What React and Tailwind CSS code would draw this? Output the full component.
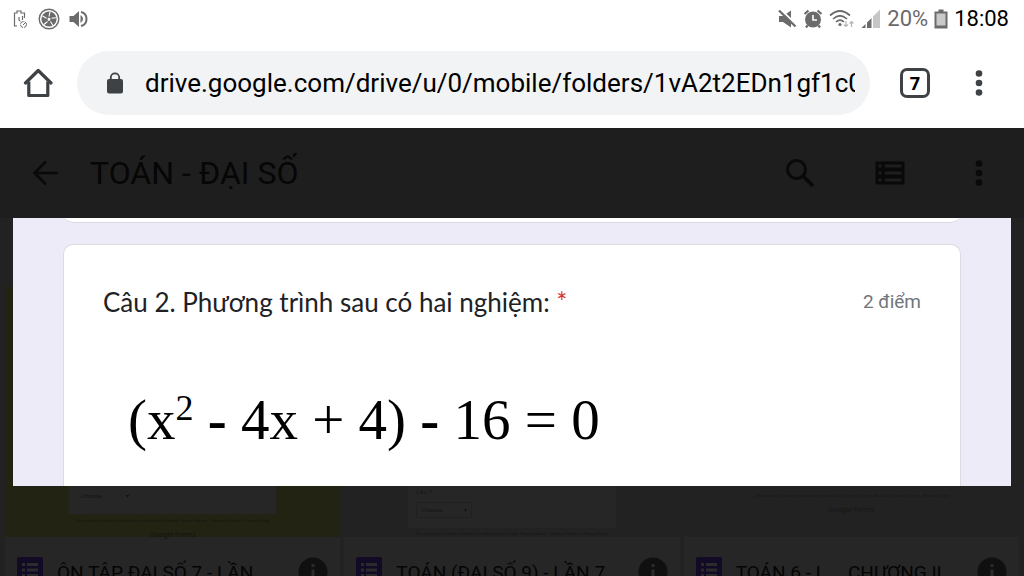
import React, { useState } from "react";

const FILES = [
  { id: 1, name: "ÔN TẬP ĐẠI SỐ 7 - LẦN", tone: "olive" },
  { id: 2, name: "TOÁN (ĐẠI SỐ 9) - LẦN 7", tone: "select" },
  { id: 3, name: "TOÁN 6 - L…\u00a0 CHƯƠNG II", tone: "footer" },
];

const DISCLAIMER =
  "This content is neither created nor endorsed by Google. Report Abuse - Terms of Service - Privacy Policy";

const MoreDots = ({ className }) => (
  <svg viewBox="0 0 8 28" className={className} fill="currentColor">
    <circle cx="4" cy="4.500" r="3.300" />
    <circle cx="4" cy="14" r="3.300" />
    <circle cx="4" cy="23.500" r="3.300" />
  </svg>
);

function StatusBar() {
  return (
    <div className="h-[38px] px-3 flex items-center justify-between text-[#6b6b6b]">
      <div className="flex items-center gap-2">
        {/* battery saver */}
        <svg viewBox="0 0 18 20" className="w-[18px] h-5" fill="none" stroke="currentColor">
          <path d="M5 17H2.500V4H5V2h4v2h3.500v5" strokeWidth="1.200" />
          <path d="M7 8v2.500q0 1.500 1.500 1.500M10.500 7v4" strokeWidth="1.200" />
          <circle cx="11.500" cy="15.500" r="3" strokeWidth="1" strokeDasharray="4 1" />
          <path d="M11 16l2-2" strokeWidth="1" />
        </svg>
        {/* soccer ball */}
        <svg viewBox="0 0 22 22" className="w-[22px] h-[22px]">
          <circle cx="11" cy="11" r="9.800" fill="none" stroke="currentColor" strokeWidth="1.400" />
          <circle cx="11" cy="11" r="7.600" fill="currentColor" />
          <g stroke="white" strokeWidth="1.100" fill="none">
            <path d="M11 8.500l1-4.500M13.500 10.300l4.500-0.500M12.500 13.500l2.500 4M9.500 13.500l-3.500 3M8.500 10.300L4.500 8" />
          </g>
          <path d="M11 9.500l1.600 1.200-.6 2h-2l-.6-2z" fill="white" />
        </svg>
        <svg viewBox="0 0 20 20" className="w-5 h-5">
          <path d="M1.500 7h4L11 2v16l-5.500-5h-4z" fill="currentColor" />
          <path d="M12.500 6q2.500 1.500 2.500 4t-2.500 4" fill="currentColor" />
          <path d="M13 3a7.200 7.200 0 0 1 0 14" fill="none" stroke="currentColor" strokeWidth="2" />
        </svg>
      </div>
      <div className="flex items-center gap-[6px] pr-[3px]">
        {/* muted */}
        <svg viewBox="0 0 20 20" className="w-5 h-5">
          <path d="M2 7h4l8-5.500v17L6 13H2z" fill="currentColor" />
          <path d="M3 0l17 16" stroke="white" strokeWidth="2" />
          <path d="M2 1.500l16.500 16" stroke="currentColor" strokeWidth="2.400" />
        </svg>
        <svg viewBox="0 0 20 20" className="w-5 h-5">
          <circle cx="10" cy="10.500" r="8" fill="currentColor" />
          <path d="M1.500 5L5.500 1.500M18.500 5l-4-3.500M4.500 16.500L3 18.500M15.500 16.500l1.500 2" stroke="currentColor" strokeWidth="2.200" />
          <path d="M10 6v5h4" fill="none" stroke="white" strokeWidth="1.600" />
        </svg>
        <svg viewBox="0 0 26 20" className="w-[26px] h-5" fill="none">
          <path d="M1 6.500q10-9 20 0M4 10q7-6.500 14 0M7 13q4-3.800 8 0" stroke="currentColor" strokeWidth="1.700" />
          <circle cx="11" cy="15.500" r="1.600" fill="currentColor" />
          <path d="M17 12v5.500M15 15.500l2 2 2-2M22.500 18v-5.500M20.500 14.500l2-2 2 2" stroke="#b5b5b5" strokeWidth="1.200" />
        </svg>
        <svg viewBox="0 0 20 20" className="w-5 h-5">
          <path d="M0.500 19l4-4v4zM6 19v-5.500l4.500-4.500V19z" fill="currentColor" />
          <path d="M12 19V7.500L19 0.500V19z" fill="#c6c6c6" />
        </svg>
        <span className="font-[Roboto] text-[22px] leading-6">20%</span>
        <svg viewBox="0 0 14 20" className="w-[14px] h-5">
          <path d="M0.500 2.500h4V0.500h5v2h4v17h-13z" fill="currentColor" />
          <path d="M2.500 4.500h9v12h-9z" fill="#c9c9c9" />
        </svg>
        <span className="font-[Roboto] text-[22px] leading-6 text-black">18:08</span>
      </div>
    </div>
  );
}

function BrowserBar() {
  const [url, setUrl] = useState(
    "drive.google.com/drive/u/0/mobile/folders/1vA2t2EDn1gf1c0",
  );

  return (
    <div className="h-[90px] pl-[23px] pr-[41px] flex items-center text-[#3f4245]">
      <button aria-label="Home" className="mr-6">
        <svg viewBox="0 0 30 30" className="w-[30px] h-[30px]" fill="none" stroke="currentColor" strokeWidth="3.200" strokeLinejoin="round">
          <path d="M2.500 15L15.200 2.500 28 15" strokeLinecap="round" />
          <path d="M5.800 13.500v14h19v-14" />
        </svg>
      </button>
      <label className="flex-1 min-w-0 h-16 rounded-full bg-[#f1f3f4] pl-[29px] pr-[15px] flex items-center">
        <svg viewBox="0 0 18 22" className="w-[18px] h-[22px] mr-[21px] shrink-0">
          <rect x="1" y="7" width="16" height="14.500" rx="2" fill="currentColor" />
          <path d="M4.800 8V5.500a4.200 4.200 0 0 1 8.400 0V8" fill="none" stroke="currentColor" strokeWidth="1.800" />
        </svg>
        <input
          aria-label="Address"
          value={url}
          onChange={(e) => setUrl(e.target.value)}
          className="flex-1 min-w-0 bg-transparent font-[Roboto] text-[26px] leading-8 text-black focus:outline-none"
        />
      </label>
      <button
        aria-label="Tabs"
        className="ml-[30px] w-[30px] h-[30px] rounded-[7px] border-3 border-[#3f4245] flex items-center justify-center font-['Noto_Sans'] text-lg leading-6 font-bold text-black"
      >
        7
      </button>
      <button aria-label="Menu" className="ml-[45px]">
        <MoreDots className="w-2 h-7" />
      </button>
    </div>
  );
}

function DriveHeader() {
  return (
    <div className="h-[90px] shrink-0 bg-[#1e1e1e] pl-8 pr-[41px] flex items-center text-[#090909]">
      <button aria-label="Back" className="mr-8">
        <svg viewBox="0 0 26 26" className="w-[26px] h-[26px]" fill="none" stroke="currentColor" strokeWidth="2.500">
          <path d="M26 13H3M14 1.500L2.500 13 14 24.500" />
        </svg>
      </button>
      <h1 className="flex-1 font-[Roboto] text-[32px] leading-10 text-[#060606]">
        TOÁN - ĐẠI SỐ
      </h1>
      <button aria-label="Search" className="mr-[60px]">
        <svg viewBox="0 0 30 30" className="w-[30px] h-[30px]" fill="none" stroke="currentColor" strokeWidth="3">
          <circle cx="11.500" cy="11.500" r="9" />
          <path d="M18 18l10 10" strokeWidth="3.800" />
        </svg>
      </button>
      <button aria-label="List view" className="mr-[70px]">
        <svg viewBox="0 0 30 24" className="w-[30px] h-6">
          <path d="M0.500 0.500h29v23h-29z" fill="currentColor" />
          <path d="M3.500 3.500h3v3h-3zM10 3.500h16.500v3H10zM3.500 10.500h3v3h-3zM10 10.500h16.500v3H10zM3.500 17.500h3v3h-3zM10 17.500h16.500v3H10z" fill="#1e1e1e" />
        </svg>
      </button>
      <button aria-label="More">
        <MoreDots className="w-2 h-7" />
      </button>
    </div>
  );
}

function QuestionPreview() {
  return (
    <div className="flex shrink-0">
      {/* sliver of the first thumbnail behind the preview */}
      <div className="w-[13px] pt-[69px] pl-[5px] flex">
        <div className="flex-1 bg-[#232314]" />
      </div>
      <div className="flex-1 min-w-0 mr-[13px] px-[50px] bg-[#eeebf8]">
        <div className="h-[5px] overflow-hidden flex items-end">
          <div className="flex-1 h-6 rounded-b-[10px] border-b border-[#d9d7e0] bg-white" />
        </div>
        <div className="mt-[21px] rounded-t-[10px] border border-b-0 border-[#dadce0] bg-white px-[39px] pt-[39px] pb-[30px]">
          <div className="flex items-center justify-between">
            <h2 className="font-[Lato] text-[26px] leading-9 text-[#202124]">
              Câu 2. Phương trình sau có hai nghiệm: <span className="text-[#d93025]">*</span>
            </h2>
            <span className="font-[Roboto] text-[19px] leading-9 text-[#70757a]">2 điểm</span>
          </div>
          <p className="mt-16 pl-[25px] font-['Liberation_Serif'] text-[57px] leading-[72px] whitespace-nowrap text-black">
            (x<sup className="static align-[19px] text-[36px] leading-none">2</sup> <b>-</b> 4x + 4) <b>-</b> 16 = 0
          </p>
        </div>
      </div>
    </div>
  );
}

function Thumbnail({ tone }) {
  if (tone === "olive")
    return (
      <div className="h-[51px] bg-[#232314] text-center text-[#12120a]">
        <div className="mx-16 h-7 bg-[#262626] px-3 pt-1 flex gap-6 text-[6px] leading-3">
          <span>Choose</span>
          <span>▾</span>
        </div>
        <p className="pt-px text-[4px] leading-3">{DISCLAIMER}</p>
        <p className="text-[7px] leading-4">Google Forms</p>
      </div>
    );

  if (tone === "select")
    return (
      <div className="h-[51px] text-center text-[#141414]">
        <div className="mx-16 h-[42px] bg-[#262626] px-2 pb-2 text-left text-[6px]">
          <p className="leading-3">Câu 1</p>
          <div className="mt-1 w-14 h-4 border border-[#202020] px-1 flex items-center justify-between">
            <span>Choose</span>
            <span>▾</span>
          </div>
        </div>
        <p className="text-[4px] leading-3">{DISCLAIMER}</p>
      </div>
    );

  return (
    <div className="h-[51px] pt-1 text-center text-[#151515]">
      <p className="text-[4px] leading-3">{DISCLAIMER}</p>
      <p className="text-[7px] leading-4">Google Forms</p>
    </div>
  );
}

function FileCard({ file }) {
  return (
    <div className="min-w-0">
      <Thumbnail tone={file.tone} />
      <div className="h-[72px] bg-[#262626] px-3 pt-5 flex items-start">
        <svg viewBox="0 0 26 26" className="w-[26px] h-[26px] shrink-0">
          <rect width="26" height="26" rx="2" fill="#130a26" />
          <path d="M5 6h3v3H5zM10 6h11v3H10zM5 11.500h3v3H5zM10 11.500h11v3H10zM5 17h3v3H5zM10 17h11v3H10z" fill="#2b2b2b" />
        </svg>
        <span className="ml-[14px] flex-1 font-[Roboto] text-[19px] leading-8 whitespace-nowrap text-[#050505]">
          {file.name}
        </span>
        <button aria-label="Details">
          <svg viewBox="0 0 30 30" className="w-[30px] h-[30px]">
            <circle cx="15" cy="15" r="14.500" fill="#101010" />
            <path d="M13.500 7h3v3h-3zM13.500 12.500h3V22h-3z" fill="#2b2b2b" />
          </svg>
        </button>
      </div>
    </div>
  );
}

export default function App() {
  return (
    <div className="h-screen overflow-hidden flex flex-col bg-[#222222]">
      <div className="bg-white shrink-0">
        <StatusBar />
        <BrowserBar />
      </div>
      <DriveHeader />
      <QuestionPreview />
      <div className="px-[5px] grid grid-cols-3 gap-x-1">
        {FILES.map((file) => (
          <FileCard key={file.id} file={file} />
        ))}
      </div>
    </div>
  );
}
